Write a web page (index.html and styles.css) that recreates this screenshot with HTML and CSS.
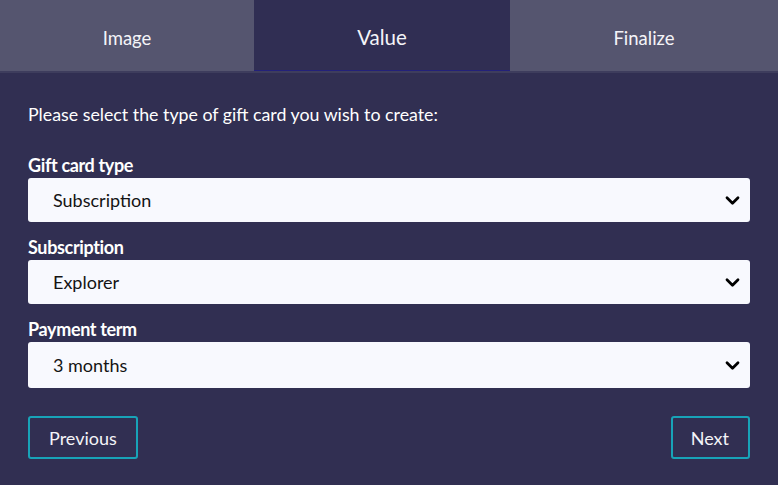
FILE: index.html
```html
<!DOCTYPE html>
<html>
<head>
<meta charset="utf-8">
<link rel="stylesheet" href="styles.css">
</head>
<body>
<div class="wizard">
  <nav class="tabs">
    <div class="tab">Image</div>
    <div class="tab active">Value</div>
    <div class="tab">Finalize</div>
  </nav>
  <div class="content">
    <p class="intro">Please select the type of gift card you wish to create:</p>
    <div class="field">
      <label class="label">Gift card type</label>
      <div class="select"><span>Subscription</span><svg class="chev" viewBox="0 0 16 12" width="15" height="11"><path d="M2 3 L8 9 L14 3" fill="none" stroke="#000" stroke-width="3" stroke-linecap="round" stroke-linejoin="round"/></svg></div>
    </div>
    <div class="field">
      <label class="label">Subscription</label>
      <div class="select"><span>Explorer</span><svg class="chev" viewBox="0 0 16 12" width="15" height="11"><path d="M2 3 L8 9 L14 3" fill="none" stroke="#000" stroke-width="3" stroke-linecap="round" stroke-linejoin="round"/></svg></div>
    </div>
    <div class="field last">
      <label class="label">Payment term</label>
      <div class="select tall"><span>3 months</span><svg class="chev" viewBox="0 0 16 12" width="15" height="11"><path d="M2 3 L8 9 L14 3" fill="none" stroke="#000" stroke-width="3" stroke-linecap="round" stroke-linejoin="round"/></svg></div>
    </div>
    <div class="actions">
      <button class="btn prev">Previous</button>
      <button class="btn next">Next</button>
    </div>
  </div>
</div>
</body>
</html>
```

FILE: styles.css
```css
html, body {
  margin: 0;
  padding: 0;
  background: #312f52;
}
body {
  font-family: "Lato", "Open Sans", sans-serif;
  color: #ffffff;
  width: 778px;
  height: 485px;
  overflow: hidden;
}
.tabs {
  display: flex;
  height: 71px;
  border-bottom: 2px solid #3e3d5d;
}
.tab {
  display: flex;
  align-items: center;
  justify-content: center;
  background: #55556f;
  font-size: 18.5px;
  color: #f4f4f8;
  padding-top: 4px;
  box-sizing: border-box;
}
.tab:nth-child(1) { width: 254px; }
.tab:nth-child(2) { width: 256px; }
.tab:nth-child(3) { flex: 1; }
.tab.active {
  background: #302e53;
  font-size: 20.5px;
  border-bottom: 1px solid #23217a;
  padding-top: 3px;
  padding-bottom: 0;
}
.content {
  padding: 30px 28px 0 28px;
}
.intro {
  margin: 0 0 27px 0;
  font-size: 17.8px;
  line-height: 22px;
}
.field {
  display: flex;
  flex-direction: column;
  margin-bottom: 12px;
}
.field.last { margin-bottom: 28px; }
.label {
  font-weight: bold;
  font-size: 18px;
  line-height: 22px;
  padding-top: 2px;
  margin-bottom: 2px;
  letter-spacing: -0.35px;
}
.select {
  display: flex;
  align-items: center;
  justify-content: space-between;
  height: 44px;
  box-sizing: border-box;
  background: #f8f9fe;
  border-radius: 3px;
  padding: 0 10px 0 25px;
  color: #141414;
  font-size: 18px;
}
.select.tall { height: 46px; }
.chev { display: block; }
.actions {
  display: flex;
  justify-content: space-between;
}
.btn {
  font-family: inherit;
  font-size: 18px;
  color: #f4f4f8;
  background: transparent;
  border: 2px solid #18a3b8;
  border-radius: 3px;
  height: 43px;
  padding: 0 19px;
}
.btn.next { padding: 0 19px 0 18px; }
```
